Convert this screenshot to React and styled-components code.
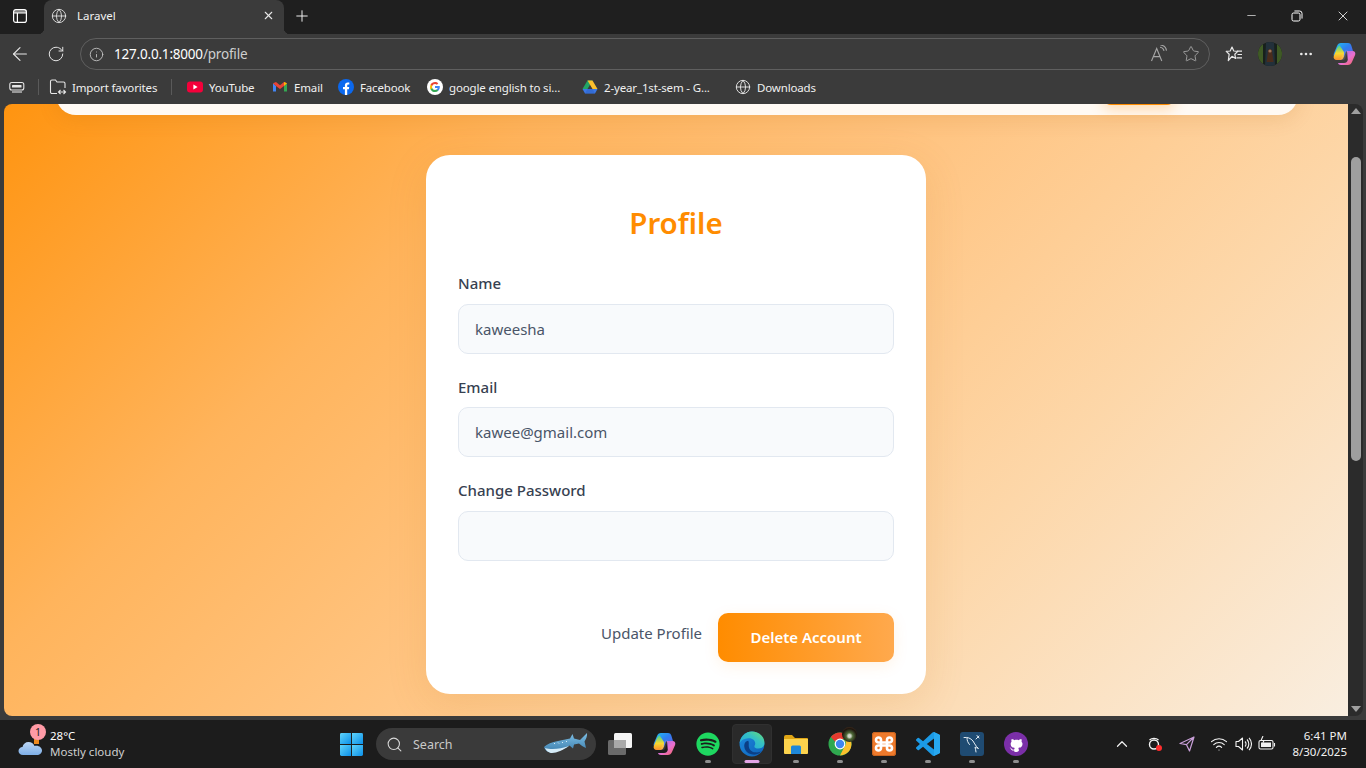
import React from "react";
import styled, { createGlobalStyle } from "styled-components";
import { FaSpotify, FaGithub } from "react-icons/fa";
import { Globe, X, Plus, ArrowLeft, RotateCw, Info, Star, Minus, MoreHorizontal, ChevronUp, Wifi, Search as SearchIcon } from "lucide-react";

const GlobalStyle = createGlobalStyle`
  html, body { margin: 0; padding: 0; background: #3b3b3b; overflow: hidden; }
  * { box-sizing: border-box; }
  #root { width: 1366px; height: 768px; }
`;

const uiFont = `"Noto Sans", "Open Sans", Arial, sans-serif`;

const Screen = styled.div`
  width: 1366px;
  height: 768px;
  display: flex;
  flex-direction: column;
  font-family: ${uiFont};
  color: #fff;
  background: #3b3b3b;
`;

const TitleBar = styled.div`
  height: 34px;
  flex: none;
  display: flex;
  align-items: center;
  background: #1f1f1f;
`;

const SideToggle = styled.div`
  width: 40px;
  margin-right: 4px;
  padding-bottom: 2px;
  display: flex;
  justify-content: center;
`;

const Tab = styled.div`
  position: relative;
  width: 240px;
  height: 34px;
  margin-right: 6px;
  padding: 0 9px 3px 7px;
  display: flex;
  align-items: center;
  gap: 10px;
  background: #3b3b3b;
  border-radius: 8px 8px 0 0;

  &::before, &::after {
    content: "";
    position: absolute;
    bottom: 0;
    width: 6px;
    height: 6px;
  }
  &::before {
    left: -6px;
    background: radial-gradient(circle at 0 0, transparent 6px, #3b3b3b 6.5px);
  }
  &::after {
    right: -6px;
    background: radial-gradient(circle at 100% 0, transparent 6px, #3b3b3b 6.5px);
  }
`;

const TabTitle = styled.span`
  flex: 1;
  font-size: 11.5px;
  color: #f2f2f2;
`;

const WindowButtons = styled.div`
  margin-left: auto;
  display: flex;
`;

const WindowButton = styled.div`
  width: 46px;
  height: 34px;
  padding-bottom: 3px;
  display: flex;
  align-items: center;
  justify-content: center;
`;

const PlusButton = styled.div`
  width: 24px;
  padding-bottom: 3px;
  display: flex;
  justify-content: center;
`;

const Toolbar = styled.div`
  height: 38px;
  flex: none;
  display: flex;
  align-items: center;
  background: #3b3b3b;
  padding-top: 2px;
`;

const NavButton = styled.div`
  width: ${({ $w }) => $w || 36}px;
  height: 30px;
  flex: none;
  display: flex;
  align-items: center;
  justify-content: center;
`;

const AddressBar = styled.div`
  width: 1130px;
  height: 32px;
  margin-left: 8px;
  margin-right: 6px;
  padding: 0 2px 0 8px;
  flex: none;
  display: flex;
  align-items: center;
  border: 1px solid #5f5f5f;
  border-radius: 16px;
`;

const Url = styled.span`
  flex: 1;
  margin-left: 10px;
  font-size: 13.5px;
  color: #fff;
  letter-spacing: -0.2px;

  span { color: #cfcfcf; }
`;

const BookmarksBar = styled.div`
  height: 32px;
  flex: none;
  display: flex;
  align-items: center;
  background: #3b3b3b;
  padding: 0 0 2px 9px;
`;

const Separator = styled.div`
  width: 1px;
  height: 16px;
  flex: none;
  background: #5a5a5a;
  margin: 0 ${({ $r }) => $r}px 0 ${({ $l }) => $l}px;
`;

const Bookmark = styled.div`
  width: ${({ $w }) => $w}px;
  flex: none;
  display: flex;
  align-items: center;
  gap: ${({ $gap }) => $gap ?? 6}px;
  font-size: 11.5px;
  letter-spacing: -0.15px;
  color: #f0f0f0;
  white-space: nowrap;

  svg { flex: none; }
`;

const Frame = styled.div`
  flex: 1;
  min-height: 0;
  display: flex;
  padding: 0 4px 4px 4px;
  background: #3b3b3b;
`;

const Page = styled.div`
  flex: 1;
  overflow: hidden;
  border-top-left-radius: 8px;
  border-bottom-left-radius: 8px;
  background: linear-gradient(135deg, #ff9410 0%, #ffb45c 28%, #ffc583 50%, #fdd7a9 72%, #f9eee0 100%);
`;

/* the page is scrolled: only the bottom of the navbar still shows */
const Navbar = styled.div`
  width: 1242px;
  height: 40px;
  margin: -29px 0 0 52px;
  padding-right: 123px;
  display: flex;
  justify-content: flex-end;
  background: #fffaf4;
  border-radius: 24px;
  box-shadow: 0 4px 20px rgba(160, 90, 10, 0.14);
`;

const NavCta = styled.div`
  width: 72px;
  height: 30px;
  border-radius: 8px;
  background: #ff8c00;
  box-shadow: 0 4px 14px rgba(255, 140, 0, 0.3);
`;

const Card = styled.div`
  width: 500px;
  margin: 40px auto 0;
  padding: 46px 32px 32px;
  background: #fff;
  border-radius: 24px;
  box-shadow: 0 10px 40px rgba(190, 110, 20, 0.14);
`;

const Heading = styled.h1`
  margin: 0 0 26px;
  text-align: center;
  font-size: 29.5px;
  line-height: 44px;
  font-weight: 600;
  color: #ff8c00;
`;

const Field = styled.div`
  margin-bottom: 21px;
`;

const Label = styled.label`
  display: block;
  margin-bottom: 8.5px;
  font-size: 15px;
  line-height: 24px;
  font-weight: 500;
  color: #374151;
`;

const Input = styled.input`
  display: block;
  width: 100%;
  height: 50px;
  padding: 0 16px;
  background: #f8fafc;
  border: 1px solid #e2e8f0;
  border-radius: 10px;
  font-family: ${uiFont};
  font-size: 15px;
  color: #4a5568;
  outline: none;
`;

const Actions = styled.div`
  margin-top: 52px;
  display: flex;
  justify-content: flex-end;
  align-items: center;
  gap: 16px;
`;

const LinkButton = styled.button`
  margin-bottom: 8px;
  padding: 0;
  border: none;
  background: none;
  font-family: ${uiFont};
  font-size: 15px;
  color: #4a5568;
`;

const PrimaryButton = styled.button`
  width: 176px;
  height: 49px;
  border: none;
  border-radius: 10px;
  background: linear-gradient(90deg, #ff8c00, #ffa94d);
  box-shadow: 0 4px 15px rgba(255, 140, 0, 0.1);
  font-family: ${uiFont};
  font-size: 15px;
  font-weight: 600;
  color: #fff;
`;

const Scrollbar = styled.div`
  width: 15px;
  flex: none;
  display: flex;
  flex-direction: column;
  align-items: center;
  background: #2b2b2b;
  border-radius: 0 8px 8px 0;
  margin-right: -1px;
`;

const ScrollArrow = styled.div`
  width: 0;
  height: 0;
  margin: ${({ $down }) => ($down ? "auto 0 4px" : "4px 0 0")};
  border-left: 5px solid transparent;
  border-right: 5px solid transparent;
  ${({ $down }) => ($down ? "border-top: 6px solid #a0a0a0;" : "border-bottom: 6px solid #a0a0a0;")}
`;

const ScrollThumb = styled.div`
  width: 10px;
  height: 304px;
  margin-top: 43px;
  border-radius: 5px;
  background: #9f9f9f;
`;

const Taskbar = styled.div`
  height: 48px;
  flex: none;
  display: flex;
  align-items: center;
  background: #1c1c1c;
`;

const Weather = styled.div`
  width: 340px;
  flex: none;
  padding-left: 18px;
  display: flex;
  align-items: center;
  gap: 6px;
`;

const WeatherIcon = styled.div`
  position: relative;
  width: 26px;
  height: 26px;
  padding-top: 5px;
`;

const Badge = styled.span`
  position: absolute;
  top: -7px;
  left: 12px;
  width: 16px;
  height: 16px;
  border-radius: 50%;
  background: #ff9aa6;
  color: #1c1c1c;
  font-size: 10.5px;
  line-height: 16px;
  text-align: center;
`;

const WeatherText = styled.div`
  font-size: 11.5px;
  line-height: 16px;
  color: #fff;

  small {
    display: block;
    font-size: 11.5px;
    color: #cfcfcf;
  }
`;

const StartButton = styled.div`
  width: 36px;
  flex: none;
  display: flex;
`;

const SearchBox = styled.div`
  width: 220px;
  height: 32px;
  flex: none;
  margin-right: 2px;
  padding: 0 8px 0 10px;
  display: flex;
  align-items: center;
  gap: 10px;
  border-radius: 16px;
  background: #3a3a3a;
  font-size: 12.5px;
  color: #c9c9c9;

  span { flex: 1; }
`;

const TaskIcons = styled.div`
  display: flex;
`;

const TaskIcon = styled.div`
  position: relative;
  width: 44px;
  height: 48px;
  display: flex;
  align-items: center;
  justify-content: center;

  ${({ $active }) =>
    $active &&
    `&::before {
      content: "";
      position: absolute;
      left: 2px;
      right: 2px;
      top: 4px;
      bottom: 4px;
      border-radius: 4px;
      background: #2a2a2a;
      border: 1px solid #303030;
    }`}

  ${({ $dot, $active }) =>
    $dot &&
    `&::after {
      content: "";
      position: absolute;
      bottom: 5px;
      left: 50%;
      transform: translateX(-50%);
      width: ${$active ? 15 : 6}px;
      height: 3px;
      border-radius: 2px;
      background: ${$active ? "#e3a4e6" : "#8e8e8e"};
    }`}

  svg { position: relative; }
`;

const ChromeAvatar = styled.span`
  position: absolute;
  top: 7px;
  right: 5px;
  width: 15px;
  height: 15px;
  border-radius: 50%;
  background: radial-gradient(circle at 50% 60%, #cfd6c8 0 12%, #4f6a38 28%, #1d140e 62%, #6b4a2a 100%);
`;

const Tray = styled.div`
  margin-left: auto;
  padding-right: 19px;
  display: flex;
  align-items: center;
`;

const TrayItem = styled.div`
  width: 24px;
  margin-right: ${({ $gap }) => $gap || 0}px;
  flex: none;
  display: flex;
  justify-content: center;
`;

const Clock = styled.div`
  width: 68px;
  text-align: right;
  font-size: 11.5px;
  line-height: 16px;
  color: #f2f2f2;
`;

const GithubBadge = styled.span`
  position: relative;
  width: 24px;
  height: 24px;
  display: flex;
  align-items: center;
  justify-content: center;
  border-radius: 50%;
  background: radial-gradient(circle, #fff 0 7.5px, #7b2fa8 8px);

  svg { border-radius: 50%; }
`;

const PanelIcon = () => (
  <svg width="16" height="16" viewBox="0 0 16 16" fill="none" stroke="#fff" strokeWidth="1.2">
    <rect x="1.6" y="1.6" width="12.8" height="12.8" rx="2.2" />
    <path d="M1.6 5h12.8M5.4 5v9.4" />
    <path d="M2 2.2h12V5H2z" fill="#fff" fillOpacity=".45" stroke="none" />
  </svg>
);

const RestoreIcon = () => (
  <svg width="12" height="12" viewBox="0 0 12 12" fill="none" stroke="#fff" strokeWidth="1">
    <rect x="1" y="3" width="8" height="8" rx="1.6" />
    <path d="M3.4 1h5.2A2.4 2.4 0 0 1 11 3.4v5.2" />
  </svg>
);

const ReadAloudIcon = () => (
  <svg width="18" height="18" viewBox="0 0 18 18" fill="none" stroke="#a6a6a6" strokeWidth="1.1">
    <path d="M1.5 16 6.7 3.5 11.8 16M3.4 11.6h6.7" />
    <path d="M10 2.2c2 .2 3.6 1.6 4 3.6M10.4 0c3.2.3 5.6 2.6 6.1 5.6" />
  </svg>
);

const FavoritesIcon = () => (
  <svg width="18" height="18" viewBox="0 0 18 18" fill="none" stroke="#e8e8e8" strokeWidth="1.2">
    <path d="M7 2 8.8 6l4 .4-3 2.8.8 4.3L7 11.3l-3.7 4.2.9-6.3-3-2.8 4-.4z" strokeLinejoin="round" />
    <path d="M12 6.2h5M12.5 9.5h4.5M11.5 12.8H17" />
  </svg>
);

const AvatarIcon = () => (
  <svg width="24" height="24" viewBox="0 0 24 24">
    <defs>
      <clipPath id="avatarClip"><circle cx="12" cy="12" r="12" /></clipPath>
    </defs>
    <g clipPath="url(#avatarClip)">
      <rect width="24" height="24" fill="#18201c" />
      <rect width="5" height="24" fill="#3f5a25" />
      <rect x="19" width="5" height="24" fill="#3f5a25" />
      <path d="M8 0h8l1 24H7z" fill="#22303a" />
      <path d="M12 7c2 0 2.4 2 2.2 4l1.4 9H8.6l1.2-9C9.6 9 10 7 12 7z" fill="#4a2c1c" />
      <circle cx="12" cy="9" r="1.6" fill="#9a7258" />
    </g>
  </svg>
);

const CopilotIcon = ({ size = 24, id = "cp" }) => (
  <svg width={size} height={size} viewBox="0 0 24 24">
    <defs>
      <linearGradient id={`${id}a`} x1="0" y1="0" x2="1" y2="1">
        <stop offset="0" stopColor="#22c3f0" />
        <stop offset=".5" stopColor="#2f7df0" />
        <stop offset="1" stopColor="#6a5be2" />
      </linearGradient>
      <linearGradient id={`${id}b`} x1="0" y1="0" x2="0" y2="1">
        <stop offset="0" stopColor="#36d49a" />
        <stop offset=".55" stopColor="#f8d92f" />
        <stop offset="1" stopColor="#f98f2e" />
      </linearGradient>
      <linearGradient id={`${id}c`} x1="0" y1="0" x2="1" y2="1">
        <stop offset="0" stopColor="#8f6bf0" />
        <stop offset=".55" stopColor="#e86fd0" />
        <stop offset="1" stopColor="#f4675c" />
      </linearGradient>
    </defs>
    <path d="M9 1h7c2 0 3 1.2 3.4 2.8L21 9l-7 .5-2 5.5H4C1.6 15 1.2 13.2 2 11l3-7c.8-2 2-3 4-3z" fill={`url(#${id}a)`} />
    <path d="M7.6 3.2C6 4 5.3 5.4 4.6 7.2L1.8 14c-.7 2.2.6 4 2.8 4h3.6c2 0 3-1 3.6-3L12 10z" fill={`url(#${id}b)`} />
    <path d="M15 9h5.5c2.4 0 3.4 2 2.6 4L20 20c-.8 2-2.2 3-4.2 3H9c-1.6 0-2.8-.8-3-2h6c2.2 0 3.2-1 3.8-3z" fill={`url(#${id}c)`} />
    <path d="M13 8.5h3l-2.4 7.2c-.5 1.6-1.6 2.3-3 2.3H8z" fill="#fff" fillOpacity=".12" />
  </svg>
);

const YoutubeIcon = () => (
  <svg width="16" height="16" viewBox="0 0 16 16">
    <rect y="2.5" width="16" height="11" rx="3" fill="#f4003a" />
    <path d="M6.4 5.6 10.6 8l-4.2 2.4z" fill="#fff" />
  </svg>
);

const GmailIcon = () => (
  <svg width="16" height="16" viewBox="0 0 16 16">
    <path d="M1 4.2v8.3h3V7z" fill="#4285f4" />
    <path d="M12 7v5.5h3V4.2z" fill="#34a853" />
    <path d="M1 4.2 4 3l4 3.2L12 3l3 1.2L12 7 8 10 4 7z" fill="#ea4335" />
    <path d="M12 3l3 1.2L12 7z" fill="#fbbc04" />
  </svg>
);

const FacebookIcon = () => (
  <svg width="16" height="16" viewBox="0 0 16 16">
    <circle cx="8" cy="8" r="8" fill="#0b68ee" />
    <path d="M6.9 16V10.2H5V8h1.9V6.3C6.9 4.4 8 3.4 9.7 3.4c.8 0 1.6.1 1.6.1v1.9h-.9c-.9 0-1.2.6-1.2 1.1V8h2l-.3 2.2H9.2V16z" fill="#fff" />
  </svg>
);

const GoogleIcon = () => (
  <svg width="16" height="16" viewBox="0 0 16 16">
    <circle cx="8" cy="8" r="8" fill="#fff" />
    <path d="M12.8 8.1c0-.4 0-.7-.1-1H8v1.9h2.7c-.1.6-.5 1.1-1 1.5v1.2h1.6c1-.9 1.5-2.2 1.5-3.6z" fill="#4285f4" />
    <path d="M8 13c1.3 0 2.4-.4 3.3-1.2l-1.6-1.2c-.4.3-1 .5-1.7.5-1.3 0-2.4-.9-2.8-2H3.6v1.3C4.4 12 6.1 13 8 13z" fill="#34a853" />
    <path d="M5.2 9.1c-.2-.7-.2-1.5 0-2.2V5.6H3.6c-.7 1.5-.7 3.3 0 4.8z" fill="#fbbc04" />
    <path d="M8 5c.7 0 1.4.3 1.9.7l1.4-1.4C10.4 3.5 9.3 3 8 3 6.1 3 4.4 4 3.6 5.6l1.6 1.3C5.6 5.8 6.7 5 8 5z" fill="#ea4335" />
  </svg>
);

const DriveIcon = () => (
  <svg width="16" height="16" viewBox="0 0 16 16">
    <path d="M5.5 1.5h5L5.5 10H.5z" fill="#22a565" />
    <path d="M5.5 1.5h5L15.5 10h-5z" fill="#fbc02d" />
    <path d="M.5 10h15L13 14.5H3z" fill="#3b78e7" />
    <path d="M5.5 10h5L13 14.5H3z" fill="#2c5fc4" fillOpacity=".5" />
  </svg>
);

const ImportIcon = () => (
  <svg width="18" height="18" viewBox="0 0 18 18" fill="none" stroke="#e6e6e6" strokeWidth="1.1">
    <path d="M8 15.5H3A1.5 1.5 0 0 1 1.5 14V3.5A1.5 1.5 0 0 1 3 2h3.5l1.5 2h6.5A1.5 1.5 0 0 1 16 5.5V10" />
    <path d="M9.5 14h7M14.5 12l2 2-2 2M11.5 12l-2 2 2 2" />
  </svg>
);

const CollectionsIcon = () => (
  <svg width="16" height="14" viewBox="0 0 16 14" fill="none" stroke="#e6e6e6" strokeWidth="1.1">
    <rect x=".8" y="2.5" width="14" height="7.5" rx="2" />
    <path d="M3 12h10" />
    <rect x="3" y="5" width="9.5" height="2.5" rx=".6" fill="#e6e6e6" stroke="none" />
  </svg>
);

const CloudIcon = () => (
  <svg width="26" height="21" viewBox="0 0 26 21">
    <defs>
      <linearGradient id="cloudFill" x1="0" y1="0" x2="0" y2="1">
        <stop offset="0" stopColor="#bcd7f6" />
        <stop offset="1" stopColor="#7eaee6" />
      </linearGradient>
    </defs>
    <rect x="16" y="3" width="5" height="5" fill="#ee8a1f" />
    <path d="M5 19c-2.8 0-4.5-1.8-4.5-4S2.4 11 4.5 11C5 8 7.5 6 10.5 6c2.8 0 5 1.6 6 4 .6-.2 1.2-.3 1.8-.3 3.3 0 5.7 2.2 5.7 4.8S21.7 19 19 19z" fill="url(#cloudFill)" />
  </svg>
);

const WindowsIcon = () => (
  <svg width="23" height="23" viewBox="0 0 24 24">
    <defs>
      <linearGradient id="winFill" x1="0" y1="0" x2="1" y2="1">
        <stop offset="0" stopColor="#5fd4fb" />
        <stop offset="1" stopColor="#0b8fe8" />
      </linearGradient>
    </defs>
    <g fill="url(#winFill)">
      <path d="M1.5 0H11.5V11.5H0V1.5A1.5 1.5 0 0 1 1.5 0z" />
      <path d="M12.5 0H22.5A1.5 1.5 0 0 1 24 1.5V11.5H12.5z" />
      <path d="M0 12.5H11.5V24H1.5A1.5 1.5 0 0 1 0 22.5z" />
      <path d="M12.5 12.5H24V22.5A1.5 1.5 0 0 1 22.5 24H12.5z" />
    </g>
  </svg>
);

const SharkIcon = () => (
  <svg width="44" height="24" viewBox="0 0 44 24">
    <defs>
      <linearGradient id="sharkFill" x1="0" y1="0" x2="0" y2="1">
        <stop offset="0" stopColor="#7ec0e6" />
        <stop offset="1" stopColor="#3a7cab" />
      </linearGradient>
    </defs>
    <path d="M0 15c3-3 8-5 14-6l12-2.5L28.5 2l1.5 4.5 6 1.5L43 1c.5 3-1 6-2.5 8.5L42 16c-3-1-5-3-7-4.5l-5 1-1 4-3.5-3c-5 3-11 6.5-18 7C3.5 20.5 1 18 0 15z" fill="url(#sharkFill)" />
    <path d="M1 16c6 2 16 1 24-2-6 4-12 7-17 7-3.5 0-6-2.5-7-5z" fill="#d6ecf8" />
    <path d="M10 11l1 1M14 10.5l1 1M18 10l1 1M22 9l1 1" stroke="#d6ecf8" strokeWidth="1" />
  </svg>
);

const TaskViewIcon = () => (
  <svg width="26" height="24" viewBox="0 0 26 24">
    <rect x="1" y="8" width="18" height="15" rx="1.5" fill="#6a6a6a" />
    <rect x="7" y="1" width="18" height="15" rx="1.5" fill="#f4f4f4" />
    <rect x="7" y="8" width="12" height="8" fill="#a9a9a9" />
  </svg>
);

const EdgeIcon = () => (
  <svg width="26" height="26" viewBox="0 0 24 24">
    <defs>
      <linearGradient id="edgeBlue" x1="0" y1="0" x2="1" y2="1">
        <stop offset="0" stopColor="#1e8ee0" />
        <stop offset="1" stopColor="#0d5fb8" />
      </linearGradient>
      <linearGradient id="edgeGreen" x1="0" y1="1" x2="1" y2="0">
        <stop offset="0" stopColor="#1fa6e0" />
        <stop offset=".6" stopColor="#35c1c4" />
        <stop offset="1" stopColor="#6ee06a" />
      </linearGradient>
    </defs>
    <circle cx="12" cy="12" r="11.5" fill="url(#edgeBlue)" />
    <path d="M.6 11C1.5 5 6.2.5 12 .5c6.8 0 11.5 5 11.5 10.5 0 3.4-2.6 5.2-5.7 5.2-2 0-3.6-.7-3.6-2 0-.6.8-1.1.8-2.6C15 8.7 12.3 6.5 8.6 6.8 5 7 2 8.5.6 11z" fill="url(#edgeGreen)" />
    <path d="M8.5 9c-2.8.3-4 3-3.5 6 .6 3.5 3.8 6.5 8 6.800 3.5.2 6-1 8-3.300-2 1.200-4 1.500-6 1.200-3.500-.5-6-3-6-6.200 0-1.800.3-3.300-.5-4.500z" fill="#0b3f86" />
  </svg>
);

const FolderIcon = () => (
  <svg width="26" height="24" viewBox="0 0 26 24">
    <path d="M1 5a2 2 0 0 1 2-2h6l3 3h12a1 1 0 0 1 1 1v4H1z" fill="#e0a616" />
    <path d="M1 7h24v14a1 1 0 0 1-1 1H2a1 1 0 0 1-1-1z" fill="#fcd34d" />
    <path d="M8 15a1.5 1.5 0 0 1 1.5-1.5h7A1.5 1.5 0 0 1 18 15v7H8z" fill="#1e88d9" />
  </svg>
);

const ChromeIcon = () => (
  <svg width="24" height="24" viewBox="0 0 24 24">
    <circle cx="12" cy="12" r="11.5" fill="#2fa84f" />
    <path d="M12 .5a11.5 11.5 0 0 1 10.4 6.6H12a5 5 0 0 0-4.6 3L2.9 5A11.5 11.5 0 0 1 12 .5z" fill="#e53a2f" />
    <path d="M22.4 7.1A11.5 11.5 0 0 1 12 23.5l4.4-8.8a5 5 0 0 0-.2-7.6z" fill="#fbc02d" />
    <circle cx="12" cy="12" r="5.4" fill="#fff" />
    <circle cx="12" cy="12" r="4.2" fill="#3f86f0" />
  </svg>
);

const XamppIcon = () => (
  <svg width="24" height="24" viewBox="0 0 24 24">
    <rect width="24" height="24" rx="3" fill="#ee7a2c" />
    <rect x=".5" y=".5" width="23" height="23" rx="2.5" fill="none" stroke="#c9641f" />
    <path d="M15 8v8a2.5 2.5 0 1 0 2.5-2.5H6.5A2.5 2.5 0 1 0 9 16V8a2.5 2.5 0 1 0-2.5 2.5h11A2.5 2.5 0 1 0 15 8" fill="none" stroke="#fff" strokeWidth="2.6" />
  </svg>
);

const VscodeIcon = () => (
  <svg width="24" height="24" viewBox="0 0 24 24">
    <path d="M23.15 2.587 18.21.21a1.494 1.494 0 0 0-1.705.29l-9.46 8.63-4.12-3.128a.999.999 0 0 0-1.276.057L.327 7.261A1 1 0 0 0 .326 8.74L3.899 12 .326 15.26a1 1 0 0 0 .001 1.479L1.65 17.94a.999.999 0 0 0 1.276.057l4.12-3.128 9.46 8.63a1.492 1.492 0 0 0 1.704.29l4.942-2.377A1.5 1.5 0 0 0 24 20.06V3.939a1.5 1.5 0 0 0-.85-1.352zm-5.146 14.861L10.826 12l7.178-5.448v10.896z" fill="#1b9ae6" />
    <path d="M18 0.1 24 3v18l-6 3z" fill="#27a8f0" />
  </svg>
);

const MysqlIcon = () => (
  <svg width="24" height="24" viewBox="0 0 24 24">
    <rect width="24" height="24" rx="3" fill="#1f4b72" />
    <path d="M4 5.5c3.5-.5 6.5.5 9 3.5 1.5 2 2 4 3.500 5.500l2 2c-1.500-.5-2.500-1-3.500-1.500.5 2 .8 3.500 1 5M7 6c0 2.500.8 4.500 2.500 6.500M19 4l-3 3M17 3.500l2 2.500" fill="none" stroke="#e4eef5" strokeWidth="1" strokeLinecap="round" />
  </svg>
);

const RingIcon = () => (
  <svg width="16" height="16" viewBox="0 0 16 16" fill="none" stroke="#f2f2f2" strokeWidth="1.4">
    <circle cx="7" cy="8.5" r="4.5" />
    <path d="M2.5 4c2.5-2.2 6.5-2.2 9 0" />
    <circle cx="12" cy="12" r="3" fill="#ff2d2d" stroke="none" />
  </svg>
);

const SendIcon = () => (
  <svg width="16" height="16" viewBox="0 0 16 16" fill="none" stroke="#c89fd8" strokeWidth="1.2" strokeLinejoin="round">
    <path d="M15 1 1 7.5l6.5 1.2L10.5 15zM7.5 8.7 15 1" />
  </svg>
);

const SpeakerIcon = () => (
  <svg width="17" height="16" viewBox="0 0 17 16" fill="none" stroke="#f2f2f2" strokeWidth="1.1">
    <path d="M1 5.5h2.5L7.5 2v12l-4-3.5H1z" strokeLinejoin="round" />
    <path d="M10 5.500a3.500 3.500 0 0 1 0 5M12 3.500a6.500 6.500 0 0 1 0 9M14 1.800a9 9 0 0 1 0 12.400" />
  </svg>
);

const BatteryIcon = () => (
  <svg width="18" height="16" viewBox="0 0 18 16" fill="none" stroke="#f2f2f2" strokeWidth="1.1">
    <rect x="1" y="4.5" width="14" height="8.5" rx="1.5" />
    <path d="M16.5 7v3.5" />
    <rect x="3" y="6.5" width="10" height="4.5" fill="#f2f2f2" stroke="none" />
    <path d="M5 0 3 4.5h3L4 8.5" fill="#1c1c1c" />
  </svg>
);

const taskApps = [
  { key: "task", icon: <TaskViewIcon /> },
  { key: "copilot", icon: <CopilotIcon id="tb" /> },
  { key: "spotify", icon: <FaSpotify size={24} color="#1ed760" />, dot: true },
  { key: "edge", icon: <EdgeIcon />, dot: true, active: true },
  { key: "folder", icon: <FolderIcon />, dot: true },
  { key: "chrome", icon: <ChromeIcon />, dot: true, avatar: true },
  { key: "xampp", icon: <XamppIcon />, dot: true },
  { key: "vscode", icon: <VscodeIcon />, dot: true },
  { key: "mysql", icon: <MysqlIcon />, dot: true },
  { key: "github", icon: <GithubBadge><FaGithub size={19} color="#7b2fa8" /></GithubBadge>, dot: true },
];

const App = () => {
  return (
    <Screen>
      <GlobalStyle />
      <TitleBar>
        <SideToggle><PanelIcon /></SideToggle>
        <Tab>
          <Globe size={16} color="#e8e8e8" strokeWidth={1.3} />
          <TabTitle>Laravel</TabTitle>
          <X size={13} color="#e8e8e8" />
        </Tab>
        <PlusButton><Plus size={18} color="#f4f4f4" strokeWidth={1.3} /></PlusButton>
        <WindowButtons>
          <WindowButton><Minus size={13} color="#fff" strokeWidth={1.2} /></WindowButton>
          <WindowButton><RestoreIcon /></WindowButton>
          <WindowButton><X size={16} color="#fff" strokeWidth={1.2} /></WindowButton>
        </WindowButtons>
      </TitleBar>

      <Toolbar>
        <NavButton $w={40}><ArrowLeft size={22} color="#e8e8e8" strokeWidth={1.2} /></NavButton>
        <NavButton $w={32}><RotateCw size={18} color="#e8e8e8" strokeWidth={1.3} /></NavButton>
        <AddressBar>
          <Info size={15} color="#c6c6c6" strokeWidth={1.4} />
          <Url>127.0.0.1:8000<span>/profile</span></Url>
          <NavButton $w={32}><ReadAloudIcon /></NavButton>
          <NavButton $w={32}><Star size={18} color="#a6a6a6" strokeWidth={1.2} /></NavButton>
        </AddressBar>
        <NavButton $w={36}><FavoritesIcon /></NavButton>
        <NavButton $w={36}><AvatarIcon /></NavButton>
        <NavButton $w={36}><MoreHorizontal size={16} color="#e8e8e8" /></NavButton>
        <NavButton $w={40}><CopilotIcon id="tool" /></NavButton>
      </Toolbar>

      <BookmarksBar>
        <CollectionsIcon />
        <Separator $l={13} $r={10} />
        <Bookmark $w={122} $gap={5}><ImportIcon />Import favorites</Bookmark>
        <Separator $l={0} $r={15} />
        <Bookmark $w={85}><YoutubeIcon />YouTube</Bookmark>
        <Bookmark $w={66}><GmailIcon />Email</Bookmark>
        <Bookmark $w={89}><FacebookIcon />Facebook</Bookmark>
        <Bookmark $w={155}><GoogleIcon />google english to si...</Bookmark>
        <Bookmark $w={153}><DriveIcon />2-year_1st-sem - G...</Bookmark>
        <Bookmark $w={90}><Globe size={16} color="#e8e8e8" strokeWidth={1.4} />Downloads</Bookmark>
      </BookmarksBar>

      <Frame>
        <Page>
          <Navbar><NavCta /></Navbar>
          <Card>
            <Heading>Profile</Heading>
            <Field>
              <Label>Name</Label>
              <Input type="text" value="kaweesha" readOnly />
            </Field>
            <Field>
              <Label>Email</Label>
              <Input type="email" value="kawee@gmail.com" readOnly />
            </Field>
            <Field>
              <Label>Change Password</Label>
              <Input type="password" readOnly />
            </Field>
            <Actions>
              <LinkButton>Update Profile</LinkButton>
              <PrimaryButton>Delete Account</PrimaryButton>
            </Actions>
          </Card>
        </Page>
        <Scrollbar>
          <ScrollArrow />
          <ScrollThumb />
          <ScrollArrow $down />
        </Scrollbar>
      </Frame>

      <Taskbar>
        <Weather>
          <WeatherIcon>
            <CloudIcon />
            <Badge>1</Badge>
          </WeatherIcon>
          <WeatherText>
            28°C
            <small>Mostly cloudy</small>
          </WeatherText>
        </Weather>
        <StartButton><WindowsIcon /></StartButton>
        <SearchBox>
          <SearchIcon size={17} color="#d8d8d8" strokeWidth={1.5} />
          <span>Search</span>
          <SharkIcon />
        </SearchBox>
        <TaskIcons>
          {taskApps.map((app) => (
            <TaskIcon key={app.key} $dot={app.dot} $active={app.active}>
              {app.icon}
              {app.avatar && <ChromeAvatar />}
            </TaskIcon>
          ))}
        </TaskIcons>
        <Tray>
          <TrayItem $gap={9}><ChevronUp size={18} color="#f2f2f2" strokeWidth={1.6} /></TrayItem>
          <TrayItem $gap={8}><RingIcon /></TrayItem>
          <TrayItem $gap={8}><SendIcon /></TrayItem>
          <TrayItem><Wifi size={18} color="#f2f2f2" strokeWidth={1.5} /></TrayItem>
          <TrayItem><SpeakerIcon /></TrayItem>
          <TrayItem><BatteryIcon /></TrayItem>
          <Clock>6:41 PM<br />8/30/2025</Clock>
        </Tray>
      </Taskbar>
    </Screen>
  );
};

export default App;
